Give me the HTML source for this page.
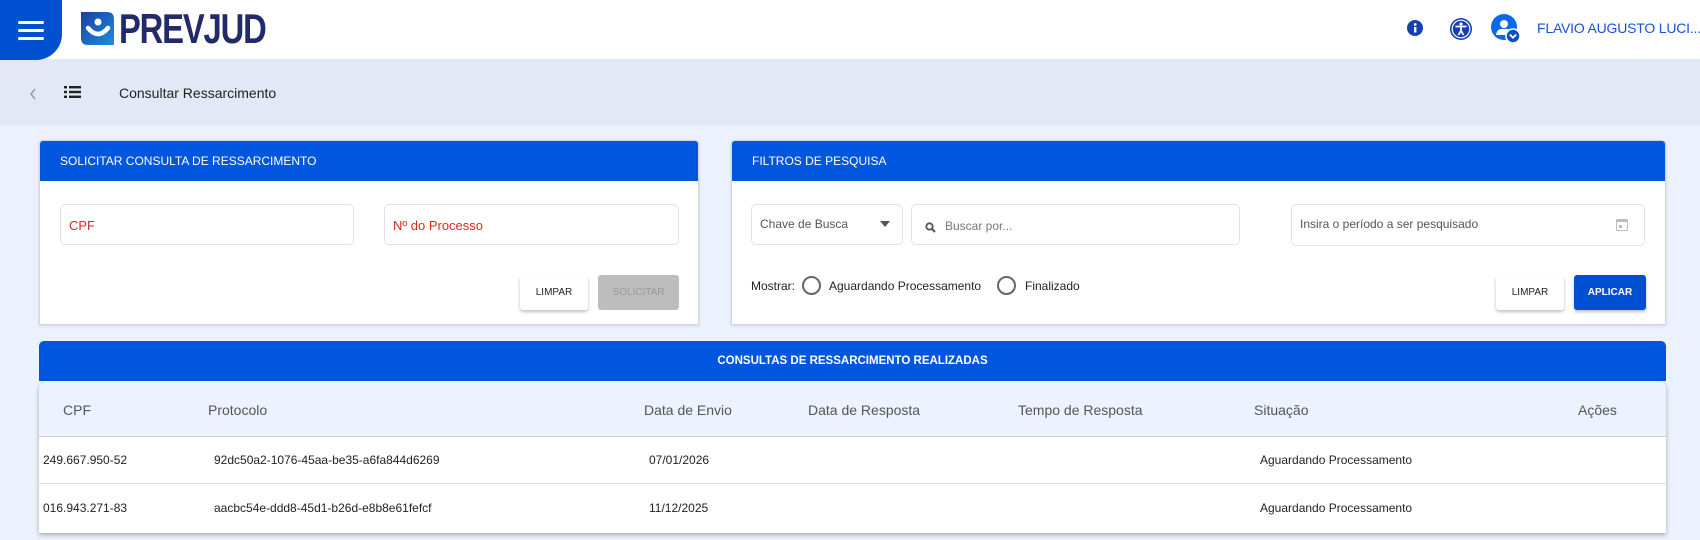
<!DOCTYPE html>
<html><head><meta charset="utf-8"><style>
*{box-sizing:border-box;margin:0;padding:0}
body{width:1700px;height:540px;overflow:hidden;background:#ecf2fd;font-family:"Liberation Sans",sans-serif;position:relative}
.a{position:absolute;white-space:nowrap}
.hdr{left:0;top:0;width:1700px;height:60px;background:#fff;border-bottom:1px solid #e4e8ef}
.menu{left:0;top:0;width:62px;height:60px;background:#0050d2;border-bottom-right-radius:26px}
.menu i{position:absolute;left:18px;width:26px;height:3px;background:#fff;border-radius:2px}
.crumb{left:0;top:60px;width:1700px;height:65px;background:#e2e8f5}
.card{background:#fff;border:1px solid #d0d4dc;box-shadow:0 1px 3px rgba(0,0,0,.12);border-radius:4px 4px 0 0;overflow:hidden}
.ch{position:absolute;left:0;top:0;right:0;height:40px;background:#0056df;color:#fff;font-size:12px;line-height:40px;padding-left:20px}
.inp{background:#fff;border:1px solid #dde4ee;border-radius:5px;font-size:12px;padding-left:8px}
.btn{font-size:10px;text-align:center;line-height:35px;border-radius:3px;box-shadow:0 2px 3px rgba(0,0,0,.25);background:#fff;color:#222}
.radio{width:19px;height:19px;border:2px solid #666;border-radius:50%}
.th{font-size:14px;color:#555;top:402px}
.td{font-size:12px;color:#222}
</style></head><body>
<div class="a hdr"></div>
<div class="a menu"><i style="top:21px"></i><i style="top:29px"></i><i style="top:37px"></i></div>
<svg class="a" style="left:81px;top:12px" width="33" height="33" viewBox="0 0 33 33">
<defs><linearGradient id="g" x1="0" y1="0" x2="1" y2="1"><stop offset="0" stop-color="#1c3f9e"/><stop offset="1" stop-color="#1a8fe0"/></linearGradient></defs>
<path d="M0 0H26Q33 0 33 7V33H7Q0 33 0 26Z" fill="url(#g)"/>
<circle cx="17" cy="10" r="3.5" fill="#fff"/>
<path d="M7 16Q17 28 27 16" stroke="#fff" stroke-width="4.5" fill="none" stroke-linecap="round"/>
</svg>
<div class="a" style="left:119px;top:5px;font-size:42px;font-weight:bold;color:#222a6a;letter-spacing:-1.5px;transform:scaleX(.78);transform-origin:left">PREVJUD</div>
<svg class="a" style="left:1407px;top:20px" width="16" height="16"><circle cx="8" cy="8" r="8" fill="#1540b5"/><rect x="7" y="7" width="2.4" height="5.5" fill="#fff"/><circle cx="8.2" cy="4.5" r="1.4" fill="#fff"/></svg>
<svg class="a" style="left:1449px;top:17px" width="24" height="24" viewBox="0 0 24 24"><circle cx="12" cy="12" r="11" fill="#1540b5"/><circle cx="12" cy="12" r="8.8" fill="none" stroke="#fff" stroke-width="1.2"/><circle cx="12" cy="7" r="1.6" fill="#fff"/><path d="M6.5 9.5H17.5M12 9.5V13.5M12 13.5L9.5 18M12 13.5L14.5 18" stroke="#fff" stroke-width="1.8" fill="none"/></svg>
<svg class="a" style="left:1491px;top:14px" width="30" height="30" viewBox="0 0 30 30"><circle cx="13" cy="13" r="13" fill="#0d6aee"/><circle cx="13" cy="10" r="4" fill="#fff"/><path d="M5 21Q6 14 13 15Q20 14 21 21Z" fill="#fff"/><circle cx="22" cy="22" r="7" fill="#0d4ec0" stroke="#fff" stroke-width="1.5"/><path d="M18.8 20.5L22 23.7L25.2 20.5" stroke="#fff" stroke-width="1.8" fill="none"/></svg>
<div class="a" style="left:1537px;top:20px;font-size:14px;color:#1a52d6;letter-spacing:-0.2px">FLAVIO AUGUSTO LUCI...</div>

<div class="a crumb"></div>
<svg class="a" style="left:28px;top:87px" width="10" height="14"><path d="M7 2L3 7L7 12" stroke="#999" stroke-width="1.5" fill="none"/></svg>
<svg class="a" style="left:64px;top:85px" width="17" height="14"><g fill="#222"><rect x="0" y="1" width="3" height="2.4"/><rect x="0" y="5.8" width="3" height="2.4"/><rect x="0" y="10.6" width="3" height="2.4"/><rect x="5" y="1" width="12" height="2.4"/><rect x="5" y="5.8" width="12" height="2.4"/><rect x="5" y="10.6" width="12" height="2.4"/></g></svg>
<div class="a" style="left:119px;top:85px;font-size:14px;color:#222">Consultar Ressarcimento</div>

<div class="a card" style="left:39px;top:140px;width:660px;height:185px"><div class="ch">SOLICITAR CONSULTA DE RESSARCIMENTO</div></div>
<div class="a inp" style="left:60px;top:204px;width:294px;height:41px;line-height:41px;color:#d62a1a;font-size:13px">CPF</div>
<div class="a inp" style="left:384px;top:204px;width:295px;height:41px;line-height:41px;color:#d62a1a;font-size:13px">Nº do Processo</div>
<div class="a btn" style="left:520px;top:275px;width:68px">LIMPAR</div>
<div class="a btn" style="left:598px;top:275px;width:81px;background:#bdbdbd;color:#999;box-shadow:none">SOLICITAR</div>

<div class="a card" style="left:731px;top:140px;width:935px;height:185px"><div class="ch">FILTROS DE PESQUISA</div></div>
<div class="a inp" style="left:751px;top:204px;width:152px;height:41px;line-height:38px;color:#555">Chave de Busca</div>
<svg class="a" style="left:880px;top:221px" width="10" height="6"><path d="M0 0H10L5 6Z" fill="#555"/></svg>
<div class="a inp" style="left:911px;top:204px;width:329px;height:41px;line-height:42px;color:#777;padding-left:33px">Buscar por...</div>
<svg class="a" style="left:925px;top:222px" width="11" height="11"><circle cx="4.5" cy="4.5" r="3.2" stroke="#555" stroke-width="1.8" fill="none"/><path d="M7 7L10 10" stroke="#555" stroke-width="2"/></svg>
<div class="a inp" style="left:1291px;top:204px;width:354px;height:42px;line-height:39px;color:#555">Insira o período a ser pesquisado</div>
<svg class="a" style="left:1616px;top:218px" width="12" height="13"><rect x="0.5" y="1.5" width="11" height="11" rx="1" fill="none" stroke="#bbb"/><rect x="0.5" y="1.5" width="11" height="2.5" fill="#bbb"/><rect x="3" y="7" width="3" height="3" fill="#bbb"/></svg>
<div class="a" style="left:751px;top:279px;font-size:12px;color:#222">Mostrar:</div>
<div class="a radio" style="left:802px;top:276px"></div>
<div class="a" style="left:829px;top:279px;font-size:12px;color:#222">Aguardando Processamento</div>
<div class="a radio" style="left:997px;top:276px"></div>
<div class="a" style="left:1025px;top:279px;font-size:12px;color:#222">Finalizado</div>
<div class="a btn" style="left:1496px;top:275px;width:68px">LIMPAR</div>
<div class="a btn" style="left:1574px;top:275px;width:72px;background:#0050d2;color:#fff;font-weight:bold">APLICAR</div>

<div class="a" style="left:39px;top:341px;width:1627px;height:40px;background:#0056df;border-radius:5px 5px 0 0;color:#fff;font-size:11.5px;font-weight:bold;text-align:center;line-height:40px">CONSULTAS DE RESSARCIMENTO REALIZADAS</div>
<div class="a" style="left:39px;top:381px;width:1627px;height:152px;background:#fff;box-shadow:0 2px 5px rgba(0,0,0,.3);border-radius:8px 8px 0 0;overflow:hidden">
<div style="height:56px;background:#edf3fe;border-bottom:1px solid #c9ced8"></div>
<div style="height:47px;border-bottom:1px solid #dcdfe4"></div>
</div>
<div class="a th" style="left:63px">CPF</div>
<div class="a th" style="left:208px">Protocolo</div>
<div class="a th" style="left:644px">Data de Envio</div>
<div class="a th" style="left:808px">Data de Resposta</div>
<div class="a th" style="left:1018px">Tempo de Resposta</div>
<div class="a th" style="left:1254px">Situação</div>
<div class="a th" style="left:1578px">Ações</div>
<div class="a td" style="left:43px;top:453px">249.667.950-52</div>
<div class="a td" style="left:214px;top:453px">92dc50a2-1076-45aa-be35-a6fa844d6269</div>
<div class="a td" style="left:649px;top:453px">07/01/2026</div>
<div class="a td" style="left:1260px;top:453px">Aguardando Processamento</div>
<div class="a td" style="left:43px;top:501px">016.943.271-83</div>
<div class="a td" style="left:214px;top:501px">aacbc54e-ddd8-45d1-b26d-e8b8e61fefcf</div>
<div class="a td" style="left:649px;top:501px">11/12/2025</div>
<div class="a td" style="left:1260px;top:501px">Aguardando Processamento</div>
</body></html>
